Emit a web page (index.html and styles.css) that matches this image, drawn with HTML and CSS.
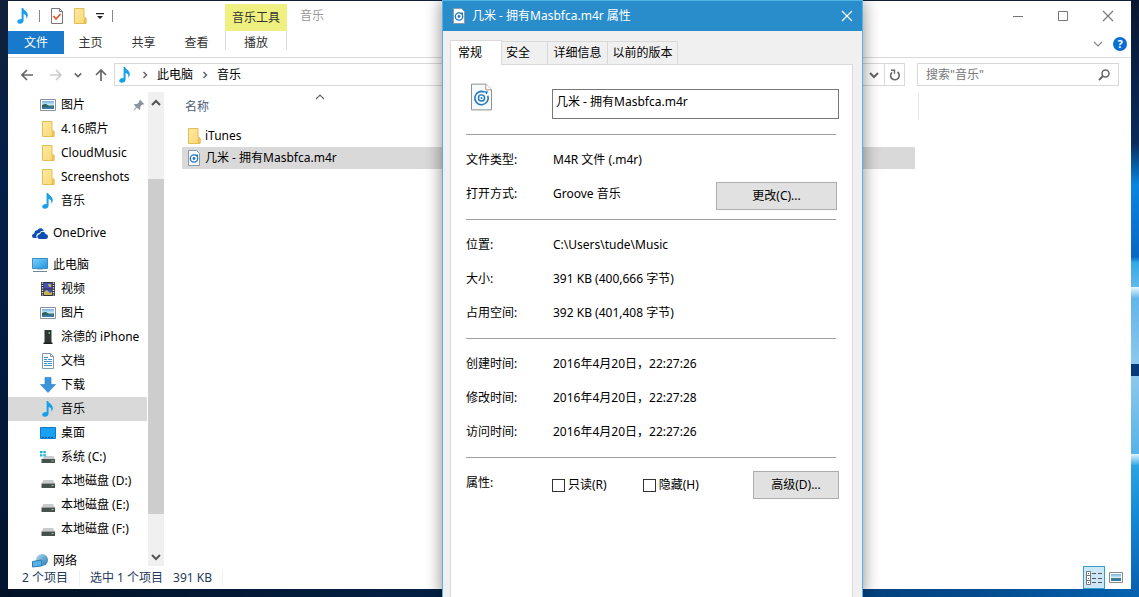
FILE: index.html
```html
<!DOCTYPE html>
<html lang="zh-CN">
<head>
<meta charset="utf-8">
<title>音乐</title>
<link rel="stylesheet" href="styles.css">
</head>
<body>
<svg class="sprite" aria-hidden="true">
  <defs>
    <linearGradient id="g-folder" x1="0" y1="0" x2="1" y2="1"><stop offset="0" stop-color="#ffe9a2"/><stop offset="1" stop-color="#f8d775"/></linearGradient>
    <linearGradient id="g-sky" x1="0" y1="0" x2="0" y2="1"><stop offset="0" stop-color="#6fb0e2"/><stop offset=".5" stop-color="#d5ecf7"/><stop offset=".6" stop-color="#3f7f78"/><stop offset="1" stop-color="#3a78b8"/></linearGradient>
    <linearGradient id="g-screen" x1="0" y1="0" x2="1" y2="1"><stop offset="0" stop-color="#7fd0fb"/><stop offset="1" stop-color="#1e96e0"/></linearGradient>
    <linearGradient id="g-globe" x1="0" y1="0" x2="1" y2="1"><stop offset="0" stop-color="#b5dff2"/><stop offset="1" stop-color="#2474b0"/></linearGradient>
  </defs>
  <symbol id="note" viewBox="0 0 16 16"><path fill="#1aa0e8" d="M6.600 0h1.600c.3 2.500 4.800 3.300 4.600 7.300-.1 1.500-.6 2.600-1.400 3.600.5-3-.8-4.400-2.800-5v6.600c0 2-1.700 3.300-3.700 3.300-1.700 0-2.700-.8-2.700-2 0-1.700 2-2.900 4.400-2.700z"/></symbol>
  <symbol id="folder" viewBox="0 0 16 16"><path fill="url(#g-folder)" stroke="#e3bd55" d="M2.500 .5h9.500v9l2 .5v5.500h-11.500z"/><path fill="#f5cf68" stroke="#dfb64c" stroke-width=".8" d="M12.300 15.300v-4.300q.9-1 1.700 0v4.300z"/></symbol>
  <symbol id="picture" viewBox="0 0 16 16"><path fill="#fff" stroke="#8795a3" d="M.5 2.500h15v11H.5z"/><path fill="url(#g-sky)" d="M2 4h12v8H2z"/><path fill="#2c6662" d="M2 8q4-2 6 .5t6 1v.8H2z"/></symbol>
  <symbol id="cloud" viewBox="0 0 16 16"><path fill="#0b4db0" d="M0 11q0-2.300 2.300-2.600.2-3 3-3.100Q6.800 2.500 9.800 3.400q1.600.7 2 2.500-3-.5-4.300 2.200-2.700 0-3.100 2.600-.2 1 .4 2.300H2Q0 12.800 0 11z"/><path fill="#0b4db0" d="M5.300 11.500q.1-2.300 2.800-2.400.5-2.500 3-2.300 2 .2 2.400 2.200 2.500.2 2.500 2.500 0 2-2 2.500H7.300q-2-.4-2-2.500z"/></symbol>
  <symbol id="pc" viewBox="0 0 16 16"><path fill="url(#g-screen)" stroke="#3b8fc4" d="M.5 1.500h15v10H.5z"/><path fill="#b8d4e4" d="M5 12h6v1H5z"/><path stroke="#6f8b9b" d="M1 14.500h14"/></symbol>
  <symbol id="video" viewBox="0 0 16 16"><path fill="#2d2e3c" d="M1 1h14v14H1z"/><path fill="#4653b5" d="M4 2h8v5.500H4zM4 8.500h8V14H4z"/><path fill="#c7b250" d="M8 3h3v3H9zM4 11l3-2 3 3 2-1v3H4z"/><path stroke="#e8e8e8" stroke-width="1.600" stroke-dasharray="1.200 1.200" d="M2.500 1.500v13M13.500 1.500v13"/></symbol>
  <symbol id="phone" viewBox="0 0 16 16"><path fill="#303634" d="M4.500 1h7v13h-7z"/><path fill="#1b1f1e" d="M3.500 13.500h9V15h-9z"/><path fill="#58b776" d="M8.500 3H10v2H8.500z"/></symbol>
  <symbol id="doc" viewBox="0 0 16 16"><path fill="#fff" stroke="#8496a5" d="M2.500.5h8l3 3v12h-11z"/><path fill="none" stroke="#8496a5" d="M10.500.5v3h3"/><path stroke="#3793d4" d="M4 4.500h4M4 6.500h3M8 6.500h4M4 8.500h8M4 10.500h3M8 10.500h4M4 12.500h8"/></symbol>
  <symbol id="down" viewBox="0 0 16 16"><path fill="#3a94db" stroke="#2c7fc4" stroke-width=".6" d="M5 .5h6v7h4.500L8 15.500.5 7.500H5z"/></symbol>
  <symbol id="desktop" viewBox="0 0 16 16"><path fill="#18a0f4" stroke="#1278c8" d="M.5 2.500h15v11H.5z"/><path stroke="#0b5591" stroke-dasharray="2 1" d="M2 12.500h12"/></symbol>
  <symbol id="disk" viewBox="0 0 16 16"><path fill="#c9cccd" d="M3.500 7h9.500l2 3.500H1.500z"/><path fill="#46504d" d="M1.500 10.500h13.500V15H1.500z"/><path fill="#86d3a4" d="M11.500 12h2v1h-2z"/></symbol>
  <symbol id="sysdisk" viewBox="0 0 16 16"><path fill="#c9cccd" d="M5 7h8.500l1.500 3.500H1.500z"/><path fill="#46504d" d="M1.500 10h13.500v4H1.500z"/><path fill="#86d3a4" d="M11.500 11.500h2v1h-2z"/><path fill="#20b5cf" d="M0 2h2.500v2.300H0zM3.300 2h2.500v2.300H3.300zM0 5.200h2.500v2.300H0zM3.300 5.200h2.500v2.300H3.300z"/></symbol>
  <symbol id="network" viewBox="0 0 16 16"><circle cx="10" cy="7" r="6" fill="url(#g-globe)"/><path fill="#58b1e2" stroke="#2d80b4" d="M.5 8.500l9-1.500v6l-9 1z"/></symbol>
  <symbol id="pin" viewBox="0 0 12 12"><path fill="#8a959d" d="M7 .8l4.200 4.200-1.200.8-.8-.2-2 2.200.2 2.200-1 .9-2.400-2.400L1 11.500l-.6-.3L3 8 .9 5.800l.8-.9 2.300.1 2.200-2-.1-1z"/></symbol>
  <symbol id="check-doc" viewBox="0 0 14 16"><path fill="#fff" stroke="#777" d="M1.500.5h8l3 3v12h-11z"/><path fill="none" stroke="#777" d="M9.500.5v3h3"/><path fill="none" stroke="#e2562c" stroke-width="1.800" d="M3.500 8l2.500 3 4.500-5"/></symbol>
  <symbol id="audio" viewBox="0 0 22 28"><path fill="#f5fafd" stroke="#8d8984" d="M.5.500h15l6 6v21h-21z"/><path fill="#fff" stroke="#b08f80" d="M15.500.5v6h6"/><path fill="none" stroke="#2476be" stroke-width="1.700" d="M14.300 8.900a7 7 0 1 0 3.300 3.800"/><circle cx="11" cy="15" r="3.200" fill="none" stroke="#2476be" stroke-width="1.500"/><circle cx="11" cy="15" r="1" fill="#2476be"/><path fill="#2476be" d="M14 8l4 .3-1.800 3.200z"/></symbol>
  <symbol id="audio-small" viewBox="0 0 14 16"><path fill="#f8fcff" stroke="#8c9aa5" d="M1.500.5h8l3 3v12h-11z"/><circle cx="7" cy="8.500" r="3.700" fill="none" stroke="#2476be" stroke-width="1.300"/><circle cx="7" cy="8.500" r="1.400" fill="#2476be"/><path fill="#2476be" d="M8.500 4.500h2.500v3z"/></symbol>
  <symbol id="x" viewBox="0 0 12 12"><path fill="none" stroke="currentColor" stroke-width="1.200" d="M1 1l10 10M11 1L1 11"/></symbol>
  <symbol id="chev-right" viewBox="0 0 8 8"><path fill="none" stroke="currentColor" stroke-width="1.500" d="M2.500 1l3 3-3 3"/></symbol>
  <symbol id="chev-down" viewBox="0 0 10 10"><path fill="none" stroke="currentColor" stroke-width="2" d="M1 3l4 4 4-4"/></symbol>
  <symbol id="chev-thin" viewBox="0 0 10 10"><path fill="none" stroke="currentColor" stroke-width="1.200" d="M1 3l4 4 4-4"/></symbol>
  <symbol id="chev-up" viewBox="0 0 10 10"><path fill="none" stroke="currentColor" stroke-width="2" d="M1 7l4-4 4 4"/></symbol>
  <symbol id="chev-up-thin" viewBox="0 0 10 10"><path fill="none" stroke="currentColor" stroke-width="1.200" d="M1 6l4-4 4 4"/></symbol>
  <symbol id="arrow" viewBox="0 0 12 12"><path fill="none" stroke="currentColor" stroke-width="1.700" d="M12 6H1.500M6 1L1 6l5 5"/></symbol>
</svg>

<main class="explorer">
  <header class="titlebar">
    <div class="quick">
      <svg class="i16"><use href="#note"/></svg>
      <span class="sep"></span>
      <button class="bare" aria-label="属性"><svg class="i14"><use href="#check-doc"/></svg></button>
      <button class="bare" aria-label="新建文件夹"><svg class="i16"><use href="#folder"/></svg></button>
      <button class="bare" aria-label="自定义"><svg class="i8" viewBox="0 0 8 8"><path fill="#222" d="M0 1h8v1.200H0zM1 4h6L4 7z"/></svg></button>
      <span class="sep"></span>
    </div>
    <div class="context">音乐工具</div>
    <h1 class="caption">音乐</h1>
    <div class="window-buttons">
      <button aria-label="最小化"><svg class="i12" viewBox="0 0 12 12"><path stroke="#777" d="M1 6.500h10"/></svg></button>
      <button aria-label="最大化"><svg class="i12" viewBox="0 0 12 12"><path fill="none" stroke="#777" d="M1.500 1.500h9v9h-9z"/></svg></button>
      <button aria-label="关闭"><svg class="i12"><use href="#x"/></svg></button>
    </div>
  </header>
  <nav class="ribbon">
    <button class="file">文件</button>
    <button class="tab">主页</button>
    <button class="tab">共享</button>
    <button class="tab">查看</button>
    <button class="tab play">播放</button>
    <div class="help">
      <button class="bare grey" aria-label="展开功能区"><svg class="i10"><use href="#chev-thin"/></svg></button>
      <button class="help-mark" aria-label="帮助">?</button>
    </div>
  </nav>
  <div class="toolbar">
    <div class="history">
      <button class="bare" aria-label="后退"><svg class="i12"><use href="#arrow"/></svg></button>
      <button class="bare pale" aria-label="前进"><svg class="i12 flip"><use href="#arrow"/></svg></button>
      <button class="bare recent" aria-label="最近"><svg class="i8"><use href="#chev-down"/></svg></button>
      <button class="bare" aria-label="向上"><svg class="i12 turn"><use href="#arrow"/></svg></button>
    </div>
    <div class="address">
      <svg class="i16"><use href="#note"/></svg>
      <svg class="i8"><use href="#chev-right"/></svg>
      <a href="#pc">此电脑</a>
      <svg class="i8"><use href="#chev-right"/></svg>
      <a href="#music">音乐</a>
      <button class="drop" aria-label="以前的位置"><svg class="i10"><use href="#chev-down"/></svg></button>
      <button class="reload" aria-label="刷新"><svg class="i12" viewBox="0 0 12 12"><path fill="none" stroke="#666" stroke-width="1.600" d="M3 3.300a4.300 4.300 0 1 0 5.500-.3"/><path fill="none" stroke="#666" stroke-width="1.400" d="M2 1.200h3.500v3.500"/></svg></button>
    </div>
    <div class="search">
      <input type="text" aria-label="搜索" placeholder='搜索"音乐"'>
      <svg class="i12" viewBox="0 0 12 12"><circle cx="7.500" cy="4.500" r="3.500" fill="none" stroke="#666" stroke-width="1.500"/><path stroke="#666" stroke-width="2" d="M5 7L1 11"/></svg>
    </div>
  </div>
  <div class="content">
    <nav class="tree">
      <a href="#p"><svg class="i16"><use href="#picture"/></svg>图片<svg class="i12 pin"><use href="#pin"/></svg></a>
      <a href="#a"><svg class="i16"><use href="#folder"/></svg>4.16照片</a>
      <a href="#b"><svg class="i16"><use href="#folder"/></svg>CloudMusic</a>
      <a href="#c"><svg class="i16"><use href="#folder"/></svg>Screenshots</a>
      <a href="#d"><svg class="i16"><use href="#note"/></svg>音乐</a>
      <a href="#e" class="root"><svg class="i16"><use href="#cloud"/></svg>OneDrive</a>
      <a href="#pc" class="root"><svg class="i16"><use href="#pc"/></svg>此电脑</a>
      <a href="#f"><svg class="i16"><use href="#video"/></svg>视频</a>
      <a href="#g"><svg class="i16"><use href="#picture"/></svg>图片</a>
      <a href="#h"><svg class="i16"><use href="#phone"/></svg>涂德的 iPhone</a>
      <a href="#i"><svg class="i16"><use href="#doc"/></svg>文档</a>
      <a href="#j"><svg class="i16"><use href="#down"/></svg>下载</a>
      <a href="#music" class="selected"><svg class="i16"><use href="#note"/></svg>音乐</a>
      <a href="#k"><svg class="i16"><use href="#desktop"/></svg>桌面</a>
      <a href="#l"><svg class="i16"><use href="#sysdisk"/></svg>系统 (C:)</a>
      <a href="#m"><svg class="i16"><use href="#disk"/></svg>本地磁盘 (D:)</a>
      <a href="#n"><svg class="i16"><use href="#disk"/></svg>本地磁盘 (E:)</a>
      <a href="#o"><svg class="i16"><use href="#disk"/></svg>本地磁盘 (F:)</a>
      <a href="#q" class="root"><svg class="i16"><use href="#network"/></svg>网络</a>
    </nav>
    <div class="scroll">
      <svg class="i10"><use href="#chev-up"/></svg>
      <div class="track"><div class="thumb"></div></div>
      <svg class="i10"><use href="#chev-down"/></svg>
    </div>
    <section class="files">
      <div class="columns"><span class="name">名称</span><svg class="i10"><use href="#chev-up-thin"/></svg></div>
      <div class="file-row"><svg class="i16"><use href="#folder"/></svg>iTunes</div>
      <div class="file-row selected"><svg class="i16"><use href="#audio-small"/></svg>几米 - 拥有Masbfca.m4r</div>
    </section>
  </div>
  <footer class="status">
    <span class="count">2 个项目</span>
    <span class="chosen">选中 1 个项目</span>
    <span class="size">391 KB</span>
    <div class="views">
      <button class="view on" aria-label="详细信息"><svg width="18" height="14" viewBox="0 0 18 14"><path fill="#fff" stroke="#777" d="M1.500.5h4v13h-4zM1.500 4.500h4M1.500 9.500h4"/><path stroke="#555" stroke-dasharray="4 2" d="M7 2.500h10M7 7.500h10M7 11.500h10"/><path fill="#555" d="M3 2h1v1H3zM3 7h1v1H3zM3 11h1v1H3z"/></svg></button>
      <button class="view" aria-label="大图标"><svg width="14" height="12" viewBox="0 0 14 12"><path fill="#fff" stroke="#888" d="M.5.500h13v10H.5z"/><path fill="url(#g-sky)" d="M2 2h10v7H2z"/></svg></button>
    </div>
  </footer>
</main>

<section class="dialog" role="dialog" aria-labelledby="dialog-title">
  <header class="dialog-title">
    <svg class="i14"><use href="#audio-small"/></svg>
    <h2 id="dialog-title">几米 - 拥有Masbfca.m4r 属性</h2>
    <button class="bare" aria-label="关闭"><svg class="i12"><use href="#x"/></svg></button>
  </header>
  <div class="dialog-body">
    <div class="tabs" role="tablist">
      <button role="tab" class="active" aria-selected="true">常规</button>
      <button role="tab" class="short">安全</button>
      <button role="tab" class="medium">详细信息</button>
      <button role="tab" class="long">以前的版本</button>
    </div>
    <div class="panel">
      <div class="group head">
        <svg class="file-icon"><use href="#audio"/></svg>
        <input type="text" aria-label="文件名" value="几米 - 拥有Masbfca.m4r">
      </div>
      <div class="group">
        <div class="row"><span>文件类型:</span><span>M4R 文件 (.m4r)</span></div>
        <div class="row"><span>打开方式:</span><span>Groove 音乐</span><button class="push wide">更改(C)...</button></div>
      </div>
      <div class="group">
        <div class="row"><span>位置:</span><span>C:\Users\tude\Music</span></div>
        <div class="row"><span>大小:</span><span>391 KB (400,666 字节)</span></div>
        <div class="row"><span>占用空间:</span><span>392 KB (401,408 字节)</span></div>
      </div>
      <div class="group">
        <div class="row"><span>创建时间:</span><span>2016年4月20日，22:27:26</span></div>
        <div class="row"><span>修改时间:</span><span>2016年4月20日，22:27:28</span></div>
        <div class="row"><span>访问时间:</span><span>2016年4月20日，22:27:26</span></div>
      </div>
      <div class="group last">
        <div class="row"><span>属性:</span>
          <div class="checks">
            <label><input type="checkbox">只读(R)</label>
            <label><input type="checkbox">隐藏(H)</label>
          </div>
          <button class="push">高级(D)...</button>
        </div>
      </div>
    </div>
  </div>
</section>
</body>
</html>
```

FILE: styles.css
```css
* { box-sizing: border-box; }

html, body { height: 100%; }

body {
  margin: 0;
  overflow: hidden;
  position: relative;
  font: 12px/16px "Noto Sans", "Noto Sans CJK SC", sans-serif;
  color: #000;
  background:
    linear-gradient(90deg, #021226, #03234a 45%, #044a8c 85%, #0562b0) bottom / 100% 8px no-repeat,
    linear-gradient(180deg, #0a1730 0, #0a2c5c 24%, #0a86e0 31%, #0a66c4 43%, #35a8e6 44%, #62b8ea 48%, #f0faff 48%, #63b4ea 50%, #8cc8ee 61%, #053a78 61%, #053a78 63%, #8cc8ee 63%, #58b2e6 76%, #e8f8ff 76%, #2ca4e2 78%, #168ad6 86%, #0a5cac 100%) right / 8px 100% no-repeat,
    linear-gradient(180deg, #10203a, #03204a 30%, #021430);
}

button, input { font: inherit; color: inherit; }
button { border: 0; padding: 0; background: none; }
a { color: inherit; text-decoration: none; }
h1, h2 { margin: 0; font: inherit; }
svg { display: block; flex: none; }

.sprite { position: absolute; width: 0; height: 0; }
.i8 { width: 8px; height: 8px; }
.i10 { width: 10px; height: 10px; }
.i12 { width: 12px; height: 12px; }
.i14 { width: 14px; height: 16px; }
.i16 { width: 16px; height: 16px; }
.flip { transform: rotate(180deg); }
.turn { transform: rotate(90deg); }
.bare { display: flex; color: #666; }
.pale { color: #ccc; }
.grey { color: #888; }

/* Explorer window */
.explorer {
  position: absolute;
  top: 1px;
  right: 8px;
  bottom: 8px;
  left: 8px;
  display: flex;
  flex-direction: column;
  background: #fff;
}

.titlebar { display: flex; height: 30px; }
.quick { display: flex; align-items: center; gap: 8px; width: 217px; padding-left: 7px; }
.sep { width: 1px; height: 12px; background: #888; }
.sep + .bare { margin-left: 2px; }
.context {
  width: 62px;
  height: 27px;
  align-self: flex-end;
  line-height: 27px;
  text-align: center;
  color: #333;
  background: #f0f080;
}
.caption { flex: 1; padding-left: 13px; line-height: 30px; color: #999; }
.window-buttons { display: flex; padding-right: 1px; color: #777; }
.window-buttons button { width: 45px; display: grid; place-items: center; }

.ribbon { display: flex; height: 27px; border-bottom: 1px solid #dadbdc; color: #333; }
.file { width: 56px; height: 23px; background: #1979ca; color: #fff; }
.tab { width: 53px; height: 24px; }
.play { width: 62px; height: 19px; margin-left: 2px; padding-top: 4px; border: solid #dadbdc; border-width: 0 1px; }
.help { margin-left: auto; display: flex; align-items: center; gap: 10px; padding-right: 4px; }
.help-mark {
  width: 14px;
  height: 14px;
  border-radius: 50%;
  background: #0a6fd0;
  color: #fff;
  font-size: 11px;
  line-height: 14px;
  font-weight: 700;
}

.toolbar { display: flex; padding: 5px 12px 6px 0; }
.history { display: flex; align-items: center; justify-content: space-between; width: 106px; padding: 0 7px 0 13px; }
.history .bare:nth-child(2) { margin: 0 0 0 4px; }
.address {
  flex: 1;
  display: flex;
  align-items: center;
  gap: 8px;
  height: 23px;
  padding-left: 2px;
  border: 1px solid #d9d9d9;
  color: #666;
}
.address a { color: #000; }
.drop, .reload { align-self: stretch; width: 20px; display: grid; place-items: center; }
.drop { margin-left: auto; }
.reload { margin-left: -8px; border-left: 1px solid #d9d9d9; }
.search { display: flex; align-items: center; width: 202px; margin-left: 12px; padding: 0 8px; border: 1px solid #d9d9d9; }
.search input { flex: 1; min-width: 0; padding: 0; border: 0; outline: 0; background: none; }
.search input::placeholder { color: #777; opacity: 1; }

.content { flex: 1; min-height: 0; display: flex; }
.tree { width: 139px; padding-top: 1px; }
.tree a { display: flex; align-items: center; gap: 5px; height: 24px; padding-left: 32px; white-space: nowrap; }
.tree .root { margin-top: 8px; padding-left: 24px; }
.tree .pin { margin-left: auto; margin-right: 2px; }
.tree .selected, .file-row.selected { background: #d9d9d9; }

.scroll {
  display: flex;
  flex-direction: column;
  align-items: center;
  gap: 6px;
  width: 16px;
  margin-left: 1px;
  padding: 6px 0 4px;
  background: #f0f0f0;
  color: #555;
}
.track { flex: 1; width: 100%; padding: 65px 0 32px; }
.thumb { height: 100%; background: #cdcdcd; }

.files { flex: 1; padding: 1px 0 0 18px; }
.columns { display: flex; align-items: center; width: 737px; height: 27px; padding-left: 3px; margin-bottom: 5px; border-right: 1px solid #e5e5e5; color: #4c607a; }
.columns .name { width: 130px; }
.columns svg { align-self: flex-start; color: #666; }
.file-row { display: flex; align-items: center; gap: 3px; width: 733px; height: 22px; padding-left: 4px; }

.status { display: flex; align-items: center; height: 23px; color: #1e395b; }
.count { width: 72px; padding-left: 14px; border-right: 1px solid #f0f0f0; }
.chosen { padding-left: 10px; }
.size { padding: 0 10px; border-right: 1px solid #f0f0f0; }
.views { display: flex; margin-left: auto; padding-right: 4px; }
.view { width: 22px; height: 23px; display: grid; place-items: center; }
.on { border: 1px solid #3c9cc8; background: #cce8f6; }

/* Properties window */
.dialog {
  position: absolute;
  top: 0;
  bottom: 0;
  left: 442px;
  width: 421px;
  display: flex;
  flex-direction: column;
  border: solid #52b4e4;
  border-width: 1px 1px 0;
  background: #f0f0f0;
  box-shadow: 0 0 16px #0007;
}
.dialog-title { display: flex; align-items: center; gap: 6px; height: 30px; padding: 0 9px; background: #2a8dcb; color: #fff; }
.dialog-title h2 { flex: 1; }
.dialog-title .bare { color: #fff; }
.dialog-body { flex: 1; display: flex; flex-direction: column; padding: 9px 9px 0 7px; }

.tabs { display: flex; align-items: flex-end; }
.tabs button { height: 23px; padding: 0 4px; border: 1px solid #d9d9d9; border-width: 1px 1px 0 0; white-space: nowrap; }
.tabs .active { position: relative; width: 52px; height: 25px; margin-bottom: -1px; padding: 0 12px 0 0; border-width: 1px 1px 0; background: #fff; }
.tabs .short { width: 46px; padding-right: 18px; }
.tabs .medium { width: 60px; }
.tabs .long { width: 70px; }

.panel { flex: 1; padding: 0 13px 0 15px; border: 1px solid #d9d9d9; border-bottom: 0; background: #fff; }
.group { padding: 8px 0; border-bottom: 1px solid #a0a0a0; margin-right: 3px; }
.head { display: flex; padding: 18px 0 15px 5px; }
.file-icon { width: 21px; height: 28px; }
.head input { flex: 1; height: 30px; margin: 6px -3px 0 60px; padding: 0 3px 6px; border: 1px solid #777; outline: 0; min-width: 0; }
.row { display: grid; grid-template-columns: 87px 1fr auto; align-items: center; height: 34px; }
.push { height: 28px; width: 86px; margin: 4px -3px 0 0; border: 1px solid #adadad; background: #e1e1e1; }
.wide { width: 121px; margin-right: -1px; }
.last { border: 0; }
.checks { display: flex; gap: 36px; margin: 4px 0 0 -1px; }
.checks label { display: flex; align-items: center; gap: 3px; }
.checks input { appearance: none; width: 13px; height: 13px; margin: 0; border: 1px solid #333; background: #fff; }
```
